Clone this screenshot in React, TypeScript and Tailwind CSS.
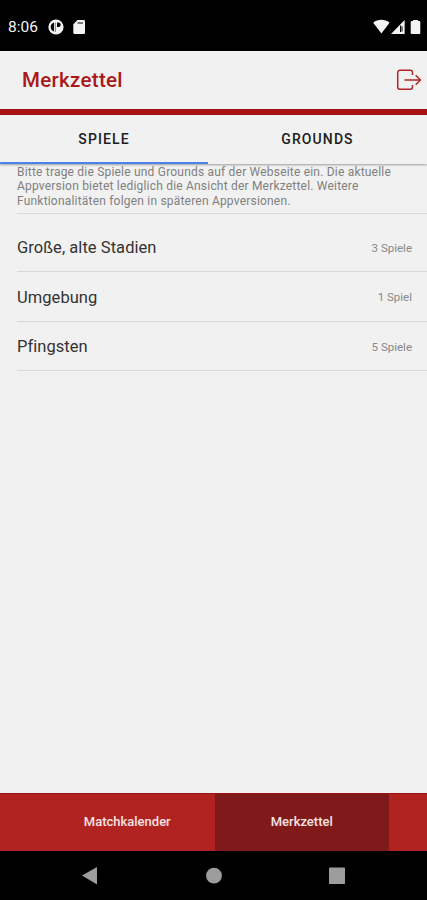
import { useState } from "react";

const lists = [
  { name: "Große, alte Stadien", count: "3 Spiele" },
  { name: "Umgebung", count: "1 Spiel" },
  { name: "Pfingsten", count: "5 Spiele" },
];

export default function App() {
  const [tab, setTab] = useState("SPIELE");

  return (
    <div className="flex h-[900px] w-[427px] flex-col overflow-hidden bg-[#f1f1f1] font-['Roboto',sans-serif]">
      <StatusBar />

      <header className="flex h-[58px] shrink-0 items-center justify-between pl-[22px] pr-[5px]">
        <h1 className="text-[20.5px] font-medium tracking-[0.3px] text-[#a91919]">Merkzettel</h1>
        <button aria-label="Logout">
          <LogoutIcon />
        </button>
      </header>
      <div className="h-1.5 shrink-0 bg-[#a81416]" />

      <div className="z-10 flex h-[49px] shrink-0 shadow-[0_1px_2px_rgba(0,0,0,0.35)]">
        <Tab label="SPIELE" active={tab === "SPIELE"} onClick={() => setTab("SPIELE")} />
        <Tab label="GROUNDS" active={tab === "GROUNDS"} onClick={() => setTab("GROUNDS")} />
      </div>

      <main className="flex-1 pl-[17px]">
        <p className="h-[50px] border-b border-[#dadada] pt-px text-[12px] leading-[14.4px] tracking-[0.2px] text-[#808080]">
          Bitte trage die Spiele und Grounds auf der Webseite ein. Die aktuelle
          <br />
          Appversion bietet lediglich die Ansicht der Merkzettel. Weitere
          <br />
          Funktionalitäten folgen in späteren Appversionen.
        </p>
        <ul className="pt-[8.5px]">
          {lists.map((list) => (
            <li
              key={list.name}
              className="flex h-[49.6px] items-center justify-between border-b border-[#d8d8d8] pr-[15px] pt-[3px]"
            >
              <span className="text-[16.5px] tracking-[0.05px] text-[#333]">{list.name}</span>
              <span className="text-[11.5px] text-[#888]">{list.count}</span>
            </li>
          ))}
        </ul>
      </main>

      <nav className="flex h-[58px] shrink-0 border-t border-[#9b1113] bg-[#b02320] pl-10 text-[13px] font-medium text-[#f6e3e3]">
        <button className="w-[174.5px] pb-px">Matchkalender</button>
        <button className="w-[174.5px] bg-[#801a1a] pb-px">Merkzettel</button>
      </nav>

      <div className="flex h-[49px] shrink-0 bg-black">
        <svg width="427" height="49" viewBox="0 0 427 49" fill="#9c9c9c">
          <path d="M82 24.5 97 16v17.5z" />
          <circle cx="214" cy="24.7" r="7.9" />
          <rect x="329" y="16.5" width="16" height="16.5" rx="0.7" />
        </svg>
      </div>
    </div>
  );
}

function StatusBar() {
  return (
    <div className="flex h-[51px] shrink-0 items-center bg-black pl-[8px] pr-[6px] pt-[2px] text-[#f4f4f4]">
      <span className="w-10 pt-0.5 text-[15.5px]">8:06</span>
      <svg width="40" height="18" viewBox="48 17 40 18" fill="currentColor">
        <circle cx="56" cy="26" r="7.6" />
        <path d="M54 21.5v9a4.7 4.700 0 0 1 0-9z" fill="#000" />
        <path d="M57 21.5h1.500a2.200 2.200 0 0 1 0 4.400H57z" fill="#000" />
        <path d="M55.300 21.500v9.500" stroke="#000" strokeWidth="0.5" />
        <path d="M77.5 19h6.3a1.2 1.2 0 0 1 1.2 1.2v11.6a1.2 1.2 0 0 1-1.2 1.2h-9.3a1.2 1.2 0 0 1-1.2-1.2v-8.6z" />
        <path d="M77.500 22h5.500" stroke="#555" strokeWidth="1.500" />
      </svg>
      <svg className="ml-auto" width="50" height="18" viewBox="371 17 50 18" fill="currentColor">
        <path d="M373.2 21.7c4.4-3.8 11.9-3.8 16.3 0l-8.1 10.7z" />
        <path d="M391 33 404.6 19v14z" />
        <path d="M400.300 25.200h2.700v5.300h-2.700z" fill="#777" />
        <path d="M400.500 24.500v6.500" stroke="#000" strokeWidth="1" />
        <path d="M413 19h5v1h1.2q1.1 0 1.1 1.1v10.8q0 1.1-1.1 1.1h-7.4q-1.1 0-1.1-1.1V21.100q0-1.1 1.1-1.100H413z" />
      </svg>
    </div>
  );
}

function Tab({ label, active, onClick }: { label: string; active: boolean; onClick: () => void }) {
  return (
    <button
      onClick={onClick}
      className={`h-full border-b-2 pt-0.5 text-[14px] font-medium tracking-[1.1px] text-[#202020] ${
        label === "SPIELE" ? "w-[208px]" : "w-[219px]"
      } ${active ? "border-[#4d82e8]" : "border-transparent"}`}
    >
      {label}
    </button>
  );
}

function LogoutIcon() {
  return (
    <svg width="26" height="22" viewBox="0 0 26 22" fill="none" stroke="#b02525" strokeWidth="1.5">
      <path d="M16.500 6V3.500a2.200 2.200 0 0 0-2.200-2.200H3.900a2.200 2.200 0 0 0-2.200 2.200v14.500a2.200 2.200 0 0 0 2.200 2.200h10.400a2.200 2.200 0 0 0 2.200-2.200V16" />
      <path d="M8.500 11H24M19.700 6.300l4.700 4.700-4.700 4.700" />
    </svg>
  );
}
